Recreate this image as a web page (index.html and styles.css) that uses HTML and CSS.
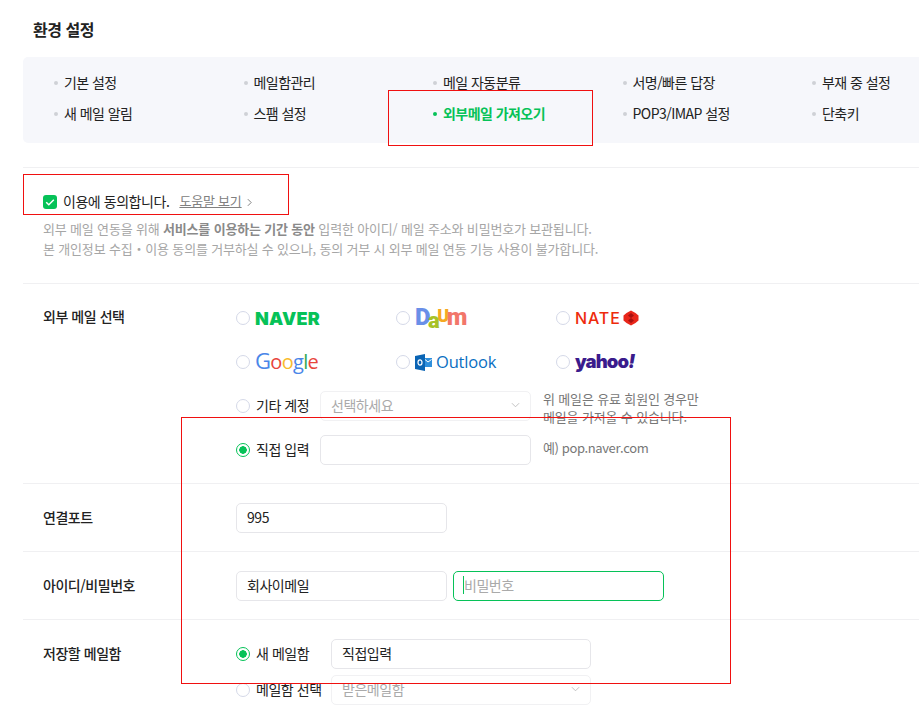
FILE: index.html
```html
<!DOCTYPE html>
<html lang="ko">
<head>
  <meta charset="utf-8">
  <title>환경 설정</title>
  <link rel="stylesheet" href="styles.css">
</head>
<body>
  <div class="page">
    <h2 class="page_title">환경 설정</h2>

    <ul class="settings_nav">
      <li>기본 설정</li>
      <li>메일함관리</li>
      <li>메일 자동분류</li>
      <li>서명/빠른 답장</li>
      <li>부재 중 설정</li>
      <li>새 메일 알림</li>
      <li>스팸 설정</li>
      <li class="active">외부메일 가져오기</li>
      <li>POP3/IMAP 설정</li>
      <li>단축키</li>
    </ul>

    <section class="agree">
      <div class="agree_line">
        <span class="checkbox">
          <svg viewBox="0 0 14 14" width="14" height="14"><path d="M3.2 7.2l2.6 2.5 5-5" fill="none" stroke="#fff" stroke-width="1.5"/></svg>
        </span>
        <span class="agree_text">이용에 동의합니다.</span>
        <a class="help_link">도움말 보기</a>
        <svg class="chevron" viewBox="0 0 6 10" width="5" height="9"><path d="M1 1l4 4-4 4" fill="none" stroke="#777" stroke-width="1.1"/></svg>
      </div>
      <p class="agree_note">외부 메일 연동을 위해 <strong>서비스를 이용하는 기간 동안</strong> 입력한 아이디/ 메일 주소와 비밀번호가 보관됩니다.<br>본 개인정보 수집・이용 동의를 거부하실 수 있으나, 동의 거부 시 외부 메일 연동 기능 사용이 불가합니다.</p>
    </section>

    <section class="form_row mail_select">
      <div class="form_label">외부 메일 선택</div>
      <div>
        <div class="logo_grid">
          <div class="logo_item"><span class="radio"></span><span class="logo naver">NAVER</span></div>
          <div class="logo_item"><span class="radio"></span><span class="logo daum"><i class="d_blue">D</i><i class="d_olive">a</i><i class="d_yellow">U</i><i class="d_coral">m</i></span></div>
          <div class="logo_item"><span class="radio"></span><span class="logo nate">NATE</span>
            <svg class="nate_gem" viewBox="0 0 16 16" width="16" height="16"><path d="M8 0.500l4.500 2.500 3 2.500v5l-3 2.500-4.500 2.500-4.500-2.500-3-2.500v-5l3-2.500z" fill="#e8261a"/><path d="M8 3l3 2.500-3 2.500-3-2.500zM5 10.500l3-2.500 3 2.500-3 2.500z" fill="#a81010"/></svg>
          </div>
          <div class="logo_item"><span class="radio"></span><span class="logo google"><i class="g_blue">G</i><i class="g_red">o</i><i class="g_yellow">o</i><i class="g_blue">g</i><i class="g_green">l</i><i class="g_red">e</i></span></div>
          <div class="logo_item"><span class="radio"></span>
            <svg class="outlook_icon" viewBox="0 0 17 17" width="17" height="17"><path d="M9 4h8v9H9z" fill="#2f8fdc"/><path d="M10 5.500l3 2.500 3.500-2.500" fill="none" stroke="#fff"/><path d="M0 2l10-2v17L0 15z" fill="#0a64b4"/><ellipse cx="5" cy="8.500" rx="2" ry="2.600" fill="none" stroke="#fff" stroke-width="1.200"/></svg>
            <span class="logo outlook">Outlook</span>
          </div>
          <div class="logo_item"><span class="radio"></span><span class="logo yahoo">yahoo<i>!</i></span></div>
        </div>
        <div class="input_line">
          <span class="radio"></span><span class="radio_text">기타 계정</span>
          <div class="field select disabled">선택하세요<svg viewBox="0 0 10 6" width="9" height="6"><path d="M1 1l4 4 4-4" fill="none" stroke="#bbb"/></svg></div>
          <p class="side_note note_paid">위 메일은 유료 회원인 경우만<br>메일을 가져올 수 있습니다.</p>
        </div>
        <div class="input_line">
          <span class="radio on"></span><span class="radio_text">직접 입력</span>
          <div class="field"></div>
          <p class="side_note note_example">예) pop.naver.com</p>
        </div>
      </div>
    </section>

    <section class="form_row">
      <div class="form_label">연결포트</div>
      <div class="field">995</div>
    </section>

    <section class="form_row">
      <div class="form_label">아이디/비밀번호</div>
      <div class="field_pair">
        <div class="field">회사이메일</div>
        <div class="field focused"><span class="caret"></span>비밀번호</div>
      </div>
    </section>

    <section class="form_row">
      <div class="form_label">저장할 메일함</div>
      <div class="inbox_lines">
        <div class="input_line">
          <span class="radio on"></span><span class="radio_text inbox_text">새 메일함</span>
          <div class="field inbox_field">직접입력</div>
        </div>
        <div class="input_line">
          <span class="radio"></span><span class="radio_text inbox_text">메일함 선택</span>
          <div class="field select disabled inbox_field">받은메일함<svg viewBox="0 0 10 6" width="9" height="6"><path d="M1 1l4 4 4-4" fill="none" stroke="#bbb"/></svg></div>
        </div>
      </div>
    </section>

    <!-- annotation boxes drawn over the capture -->
    <div class="mark mark_nav"></div>
    <div class="mark mark_agree"></div>
    <div class="mark mark_form"></div>
  </div>
</body>
</html>
```

FILE: styles.css
```css
* {
  box-sizing: border-box;
}

html, body {
  margin: 0;
  background: #fff;
}

.page {
  position: relative;
  width: 919px;
  height: 710px;
  overflow: hidden;
  padding-left: 23px;
  font-family: "Noto Sans CJK KR", "Noto Sans", sans-serif;
  font-size: 14px;
  color: #222;
  letter-spacing: -0.45px;
}

.page_title {
  margin: 0;
  padding: 17px 0 0 10px;
  height: 57px;
  font-size: 16px;
  line-height: 24px;
  font-weight: 700;
}

.settings_nav {
  display: grid;
  grid-template-columns: repeat(5, 189.5px);
  grid-auto-rows: 31px;
  width: 920px;
  height: 86px;
  margin: 0;
  padding: 10px 0 0 31px;
  list-style: none;
  background: #f6f7fb;
  border-radius: 5px 0 0 5px;
  letter-spacing: -0.55px;
}

.settings_nav li {
  display: flex;
  align-items: center;
  gap: 6px;
  white-space: nowrap;
  line-height: 31px;
}

.settings_nav li::before {
  content: "";
  width: 4px;
  height: 4px;
  border-radius: 50%;
  background: #cfd1d6;
}

.settings_nav .active {
  color: #06c258;
  font-weight: 700;
}

.settings_nav .active::before {
  background: #06c258;
}

.agree {
  margin-top: 24px;
  height: 116px;
  padding: 24px 0 0 20px;
  border-top: 1px solid #f0f0f2;
}

.agree_line {
  display: flex;
  align-items: center;
  height: 20px;
  line-height: 20px;
}

.agree_text {
  padding-bottom: 2px;
}

.checkbox {
  width: 14px;
  height: 14px;
  margin-right: 6px;
  border-radius: 3px;
  background: #06c258;
  display: flex;
}

.help_link {
  margin-left: 10px;
  margin-right: 5px;
  padding-bottom: 2px;
  font-size: 13px;
  letter-spacing: -0.2px;
  color: #808080;
  text-decoration: underline;
}

.agree_note {
  margin: 7px 0 0;
  font-size: 13px;
  line-height: 20px;
  letter-spacing: -0.17px;
  color: #a6a6a6;
}

.agree_note strong {
  color: #8a8a8a;
}

.form_row {
  display: flex;
  height: 68px;
  padding: 19px 0 0 20px;
  border-top: 1px solid #f0f0f2;
}

.form_label {
  width: 193px;
  flex: none;
  line-height: 28px;
  font-weight: 500;
}

.mail_select {
  padding: 12px 0 12px 20px;
  height: 200px;
}

.mail_select .form_label {
  padding-top: 6px;
}

.logo_grid {
  display: grid;
  grid-template-columns: repeat(3, 160px);
  grid-auto-rows: 44px;
}

.logo_item, .input_line {
  display: flex;
  align-items: center;
}

.input_line {
  height: 44px;
}

.radio {
  flex: none;
  width: 14px;
  height: 14px;
  margin-right: 5px;
  border: 1px solid #d5d9e8;
  border-radius: 50%;
  background: #fff;
}

.radio.on {
  border-color: #06c258;
  background: radial-gradient(circle, #06c258 0 3.5px, #fff 4px);
}

.radio_text {
  width: 64px;
  margin-left: 1px;
  padding-bottom: 2px;
  white-space: nowrap;
}

.inbox_text {
  width: 75px;
}

.logo {
  white-space: nowrap;
}

.logo i {
  font-style: normal;
}

.naver {
  font-family: "Inter", sans-serif;
  font-size: 18px;
  font-weight: 900;
  letter-spacing: 0.2px;
  color: #06c258;
}

.daum {
  font-family: "Roboto", sans-serif;
  font-size: 24px;
  font-weight: 900;
  letter-spacing: -2.5px;
}

.d_blue { color: #6a8fe8; }
.d_olive { color: #a8c226; vertical-align: -3px; font-size: 22px; }
.d_yellow { color: #f5a921; vertical-align: 3px; font-size: 18px; }
.d_coral { color: #f2766a; }

.nate {
  font-family: "Inter", sans-serif;
  font-size: 16px;
  font-weight: 500;
  letter-spacing: 0.9px;
  color: #ee2b0c;
}

.nate_gem {
  margin-left: 2px;
}

.google {
  font-family: "Open Sans", sans-serif;
  font-size: 20px;
  letter-spacing: -0.7px;
  padding-bottom: 4px;
}

.google .g_blue:first-child {
  font-size: 22px;
}

.g_blue { color: #4a86e8; }
.g_red { color: #e8453c; }
.g_yellow { color: #f9bb2d; }
.g_green { color: #34a853; }

.outlook_icon {
  margin-right: 4px;
}

.outlook {
  font-family: "Open Sans", sans-serif;
  font-size: 16.5px;
  letter-spacing: -0.2px;
  padding-bottom: 2px;
  color: #0a6fc2;
}

.yahoo {
  font-family: "Inter", sans-serif;
  font-size: 18.5px;
  font-weight: 900;
  letter-spacing: -0.9px;
  padding-bottom: 2px;
  color: #3a1b8c;
}

.yahoo i {
  font-style: italic;
}

.field {
  width: 211px;
  height: 30px;
  padding: 0 10px 2px;
  flex: none;
  display: flex;
  align-items: center;
  justify-content: space-between;
  border: 1px solid #e6e6ea;
  border-radius: 5px;
  background: #fff;
}

.field.disabled {
  border-color: #f1f1f3;
  color: #aaa;
}

.field.focused {
  justify-content: flex-start;
  border-color: #06c258;
  padding-left: 9px;
  color: #aaa;
}

.caret {
  width: 1px;
  height: 18px;
  background: #06c258;
}

.field_pair {
  display: flex;
  gap: 6px;
}

.side_note {
  margin: 0 0 0 12px;
  font-size: 13px;
  line-height: 18px;
  letter-spacing: -0.15px;
  color: #777;
}

.note_paid {
  padding-top: 4px;
}

.note_example {
  padding-bottom: 4px;
  letter-spacing: -0.4px;
}

.inbox_lines .input_line {
  height: 30px;
}

.inbox_lines .input_line:first-child {
  margin-bottom: 6px;
}

.inbox_field {
  width: 260px;
}

.mark {
  position: absolute;
  border: 1px solid #f01010;
  pointer-events: none;
}

.mark_nav {
  left: 388px;
  top: 90px;
  width: 205px;
  height: 56px;
}

.mark_agree {
  left: 23px;
  top: 174px;
  width: 266px;
  height: 41px;
}

.mark_form {
  left: 181px;
  top: 417px;
  width: 550px;
  height: 267px;
}
```
